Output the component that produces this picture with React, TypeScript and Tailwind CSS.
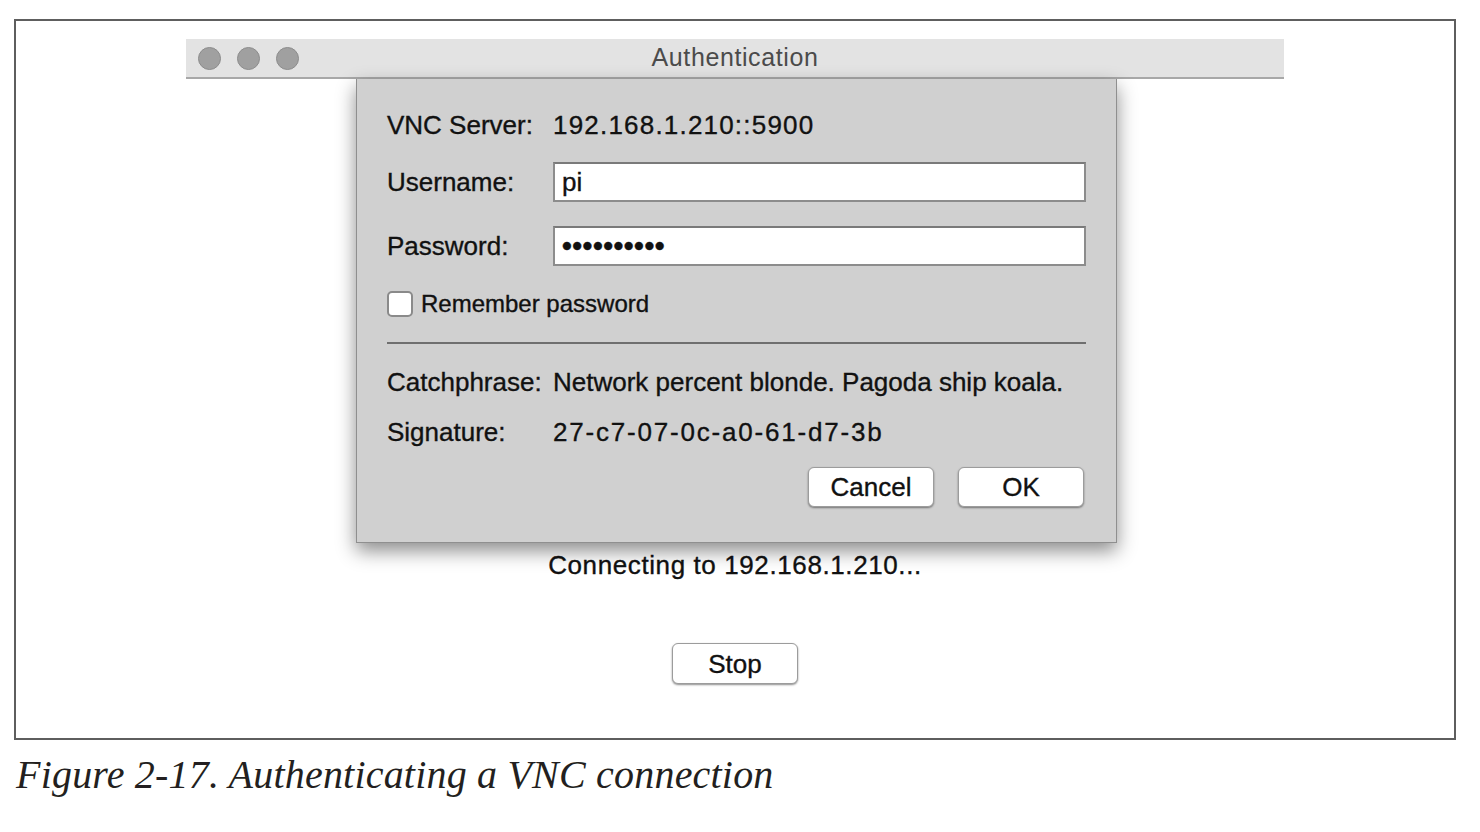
import React from 'react';

const sans = "font-['Liberation_Sans',Arial,sans-serif]";
// the screenshot text is a touch heavier than Liberation regular
const heavy = '[-webkit-text-stroke:0.35px_#111]';

const MacButton = ({ label, className = '' }: { label: string; className?: string }) => (
  <button
    className={`h-[40px] w-[126px] rounded-[6px] border border-[#9c9c9c] bg-white text-[26px] leading-none text-[#111] shadow-[0_1px_2px_rgba(0,0,0,0.45)] ${heavy} ${className}`}
  >
    {label}
  </button>
);

const Field = ({ children }: { children: React.ReactNode }) => (
  <div className="flex h-[40px] flex-1 items-center border-2 border-[#8c8c8c] border-t-[#7a7a7a] bg-white pl-[7px]">
    {children}
  </div>
);

const AuthDialog = () => {
  return (
    <div className={`absolute left-[170px] top-[40px] flex h-[464px] w-[761px] flex-col border-x border-b border-[#8f8f8f] bg-[#d0d0d0] px-[30px] pt-[28px] text-[26px] text-[#111] shadow-[0_8px_18px_rgba(0,0,0,0.45)] ${heavy}`}>
      <div className="flex h-[36px] items-center">
        <span className="w-[166px]">VNC Server:</span>
        <span className="tracking-[1.2px]">192.168.1.210::5900</span>
      </div>
      <div className="mt-[19px] flex items-center">
        <span className="w-[166px]">Username:</span>
        <Field>pi</Field>
      </div>
      <div className="mt-[24px] flex items-center">
        <span className="w-[166px]">Password:</span>
        <Field>
          <span className="text-[28px] font-bold tracking-[0.5px]">••••••••••</span>
        </Field>
      </div>
      <div className="mt-[22px] flex h-[32px] items-center gap-[8px]">
        <div className="h-[26px] w-[26px] rounded-[5px] border-2 border-[#8a8a8a] bg-white" />
        <span className="text-[24px]">Remember password</span>
      </div>
      <div className="mt-[22px] h-[2px] bg-[#6f6f6f]" />
      <div className="mt-[20px] flex h-[36px] items-center">
        <span className="w-[166px]">Catchphrase:</span>
        <span>Network percent blonde. Pagoda ship koala.</span>
      </div>
      <div className="mt-[14px] flex h-[36px] items-center">
        <span className="w-[166px]">Signature:</span>
        <span className="tracking-[1.8px]">27-c7-07-0c-a0-61-d7-3b</span>
      </div>
      <div className="mt-[17px] mr-[2px] flex justify-end gap-[24px]">
        <MacButton label="Cancel" />
        <MacButton label="OK" />
      </div>
    </div>
  );
};

const App = () => {
  return (
    <div className={`h-[832px] w-[1480px] bg-white pl-[14px] pt-[19px] ${sans}`}>
      <div className="flex h-[721px] w-[1442px] flex-col items-center border-2 border-[#5e5e5e] pt-[18px]">
        <div className="relative w-[1098px]">
          <div className="grid h-[40px] grid-cols-[1fr_auto_1fr] items-center border-b-2 border-[#a8a8a8] bg-[#e3e3e3]">
            <div className="flex gap-[16px] pl-[12px]">
              <span className="h-[23px] w-[23px] rounded-full border border-[#8c8c8c] bg-[#a0a0a0]" />
              <span className="h-[23px] w-[23px] rounded-full border border-[#8c8c8c] bg-[#a0a0a0]" />
              <span className="h-[23px] w-[23px] rounded-full border border-[#8c8c8c] bg-[#a0a0a0]" />
            </div>
            <span className="text-[25px] tracking-[0.6px] text-[#4b4b4b]">Authentication</span>
            <div />
          </div>
          <div className="flex flex-col items-center pt-[468px] text-[#111]">
            <div className={`h-[36px] text-[26px] leading-[36px] tracking-[0.6px] ${heavy}`}>Connecting to 192.168.1.210...</div>
            <MacButton label="Stop" className="mt-[60px] h-[41px]" />
          </div>
          <AuthDialog />
        </div>
      </div>
      <p className="mt-[11px] pl-[2px] font-['Liberation_Serif',serif] text-[40px] italic leading-[48px] tracking-[0.2px] text-[#231f20]">
        Figure 2-17. Authenticating a VNC connection
      </p>
    </div>
  );
};

export default App;
